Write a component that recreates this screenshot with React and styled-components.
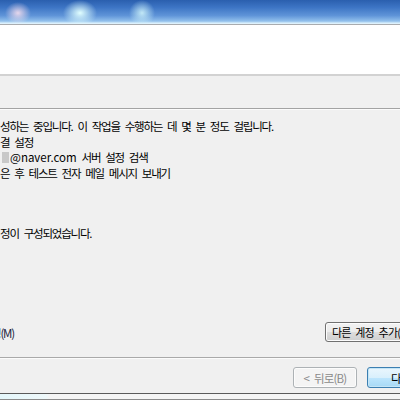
import React from "react"
import styled, { createGlobalStyle } from "styled-components"

const GlobalStyle = createGlobalStyle({
    "html, body": {
        margin: 0,
        padding: 0,
        background: "#f0f0f0"
    },
    body: {
        fontFamily: "\"Noto Sans CJK KR\", \"Liberation Sans\", sans-serif"
    }
})

const Window = styled.div({
    width: "400px",
    height: "400px",
    overflow: "hidden",
    display: "flex",
    flexDirection: "column",
    background: "#f0f0f0",
    fontFamily: "\"Noto Sans CJK KR\", \"Liberation Sans\", sans-serif",
    color: "#000"
})

const TitleBar = styled.div({
    height: "24px",
    flexShrink: 0,
    borderTop: "1px solid #14407d",
    borderBottom: "1px solid #a9acaf",
    boxSizing: "content-box",
    marginTop: "-1px",
    background: [
        "radial-gradient(ellipse 13px 11px at 18px 13px, rgba(255,228,240,0.85), rgba(255,228,240,0) 100%)",
        "radial-gradient(ellipse 17px 13px at 80px 13px, rgba(225,255,255,1), rgba(225,255,255,0) 100%)",
        "radial-gradient(ellipse 13px 13px at 142px 13px, rgba(205,242,250,0.9), rgba(205,242,250,0) 100%)",
        "linear-gradient(to bottom, #2a5fae 0%, #3c74c4 30%, #5f94d8 65%, #92c0ec 88%, #d6eefc 96%, #e4f4fd 100%)"
    ].join(", ")
})

const Header = styled.div({
    height: "49px",
    flexShrink: 0,
    background: "#ffffff",
    borderBottom: "2px solid #d2d2d2"
})

const Band = styled.div({
    height: "32px",
    flexShrink: 0,
    background: "#f0f0f0",
    borderBottom: "1px solid #a3a3a3",
    boxShadow: "0 1px 0 #fbfbfb"
})

const Content = styled.div({
    flex: 1,
    marginTop: "1px",
    padding: "9px 0 0 0",
    fontSize: "11.5px",
    lineHeight: "15.6px",
    letterSpacing: "-1.2px",
    wordSpacing: "3.5px",
    fontFeatureSettings: "\"palt\"",
    display: "flex",
    flexDirection: "column"
})

const Line = styled.div({
    whiteSpace: "nowrap",
    display: "flex",
    alignItems: "center"
})

const Latin = styled.span({
    letterSpacing: "0"
})

const Masked = styled.span({
    display: "inline-block",
    width: "7px",
    height: "11px",
    margin: "0 1px 0 2px",
    background: "#c8c8c8"
})

const Done = styled(Line)({
    marginTop: "45px"
})

const OptionRow = styled.div({
    marginTop: "80px",
    display: "grid",
    gridTemplateColumns: "325px auto",
    alignItems: "center",
    height: "20px"
})

const OptionLabel = styled.span({
    marginLeft: "-9px",
    paddingTop: "4px",
    whiteSpace: "nowrap",
    color: "#1d2340"
})

const Button = styled.button(({ $variant }) => ({
    height: "20px",
    boxSizing: "border-box",
    padding: "0 6px",
    borderRadius: "3px",
    fontFamily: "inherit",
    fontSize: "11px",
    letterSpacing: "-0.8px",
    wordSpacing: "3px",
    fontFeatureSettings: "\"palt\"",
    whiteSpace: "nowrap",
    textAlign: "left",
    border: $variant === "disabled" ? "1px solid #adb2b5" : $variant === "default" ? "1px solid #3c7fb1" : "1px solid #707070",
    color: $variant === "disabled" ? "#8a8a8a" : "#000",
    boxShadow: $variant === "default" ? "inset 0 0 0 1px #c4e5f6" : "inset 0 0 0 1px #fcfcfc",
    background: $variant === "disabled"
        ? "#f4f4f4"
        : $variant === "default"
            ? "linear-gradient(to bottom, #eaf6fd 0%, #d9f0fc 50%, #bee6fd 51%, #a7d9f5 100%)"
            : "linear-gradient(to bottom, #f2f2f2 0%, #ebebeb 50%, #dddddd 51%, #cfcfcf 100%)"
}))

const AddButton = styled(Button)({
    width: "110px"
})

const Accel = styled.span({
    color: "#1f5fa8"
})

const Footer = styled.div({
    height: "36px",
    flexShrink: 0,
    boxSizing: "border-box",
    borderTop: "1px solid #a9a9a9",
    boxShadow: "inset 0 1px 0 #fbfbfb",
    padding: "9px 0 0 293px",
    display: "flex",
    gap: "10px",
    alignItems: "flex-start"
})

const NavButton = styled(Button)({
    width: "64px",
    height: "21px",
    fontSize: "11.5px",
    textAlign: "center",
    flexShrink: 0,
    padding: 0
})

const NextButton = styled(NavButton)({
    width: "90px",
    textAlign: "left",
    paddingLeft: "23px"
})

const BottomStrip = styled.div({
    height: "7px",
    flexShrink: 0,
    borderTop: "1px solid #5a5a5a",
    boxSizing: "border-box",
    background: "linear-gradient(to right, #e4f6fa 0px, #eef8fa 46px, #f4f4f4 50px, #f4f4f4 100%)",
    borderBottom: "1px solid #8a8a8a"
})

const App = () => (
    <Window>
        <GlobalStyle />
        <TitleBar />
        <Header />
        <Band />
        <Content>
            <Line>성하는 중입니다. 이 작업을 수행하는 데 몇 분 정도 걸립니다.</Line>
            <Line>결 설정</Line>
            <Line><Masked /><Latin>@naver.com</Latin>&nbsp;서버 설정 검색</Line>
            <Line>은 후 테스트 전자 메일 메시지 보내기</Line>
            <Done>정이 구성되었습니다.</Done>
            <OptionRow>
                <OptionLabel>정(M)</OptionLabel>
                <AddButton>다른 계정 추가(<Accel>A</Accel>)...</AddButton>
            </OptionRow>
        </Content>
        <Footer>
            <NavButton $variant="disabled">&lt; 뒤로(B)</NavButton>
            <NextButton $variant="default">다음(N) &gt;</NextButton>
        </Footer>
        <BottomStrip />
    </Window>
)

export default App
